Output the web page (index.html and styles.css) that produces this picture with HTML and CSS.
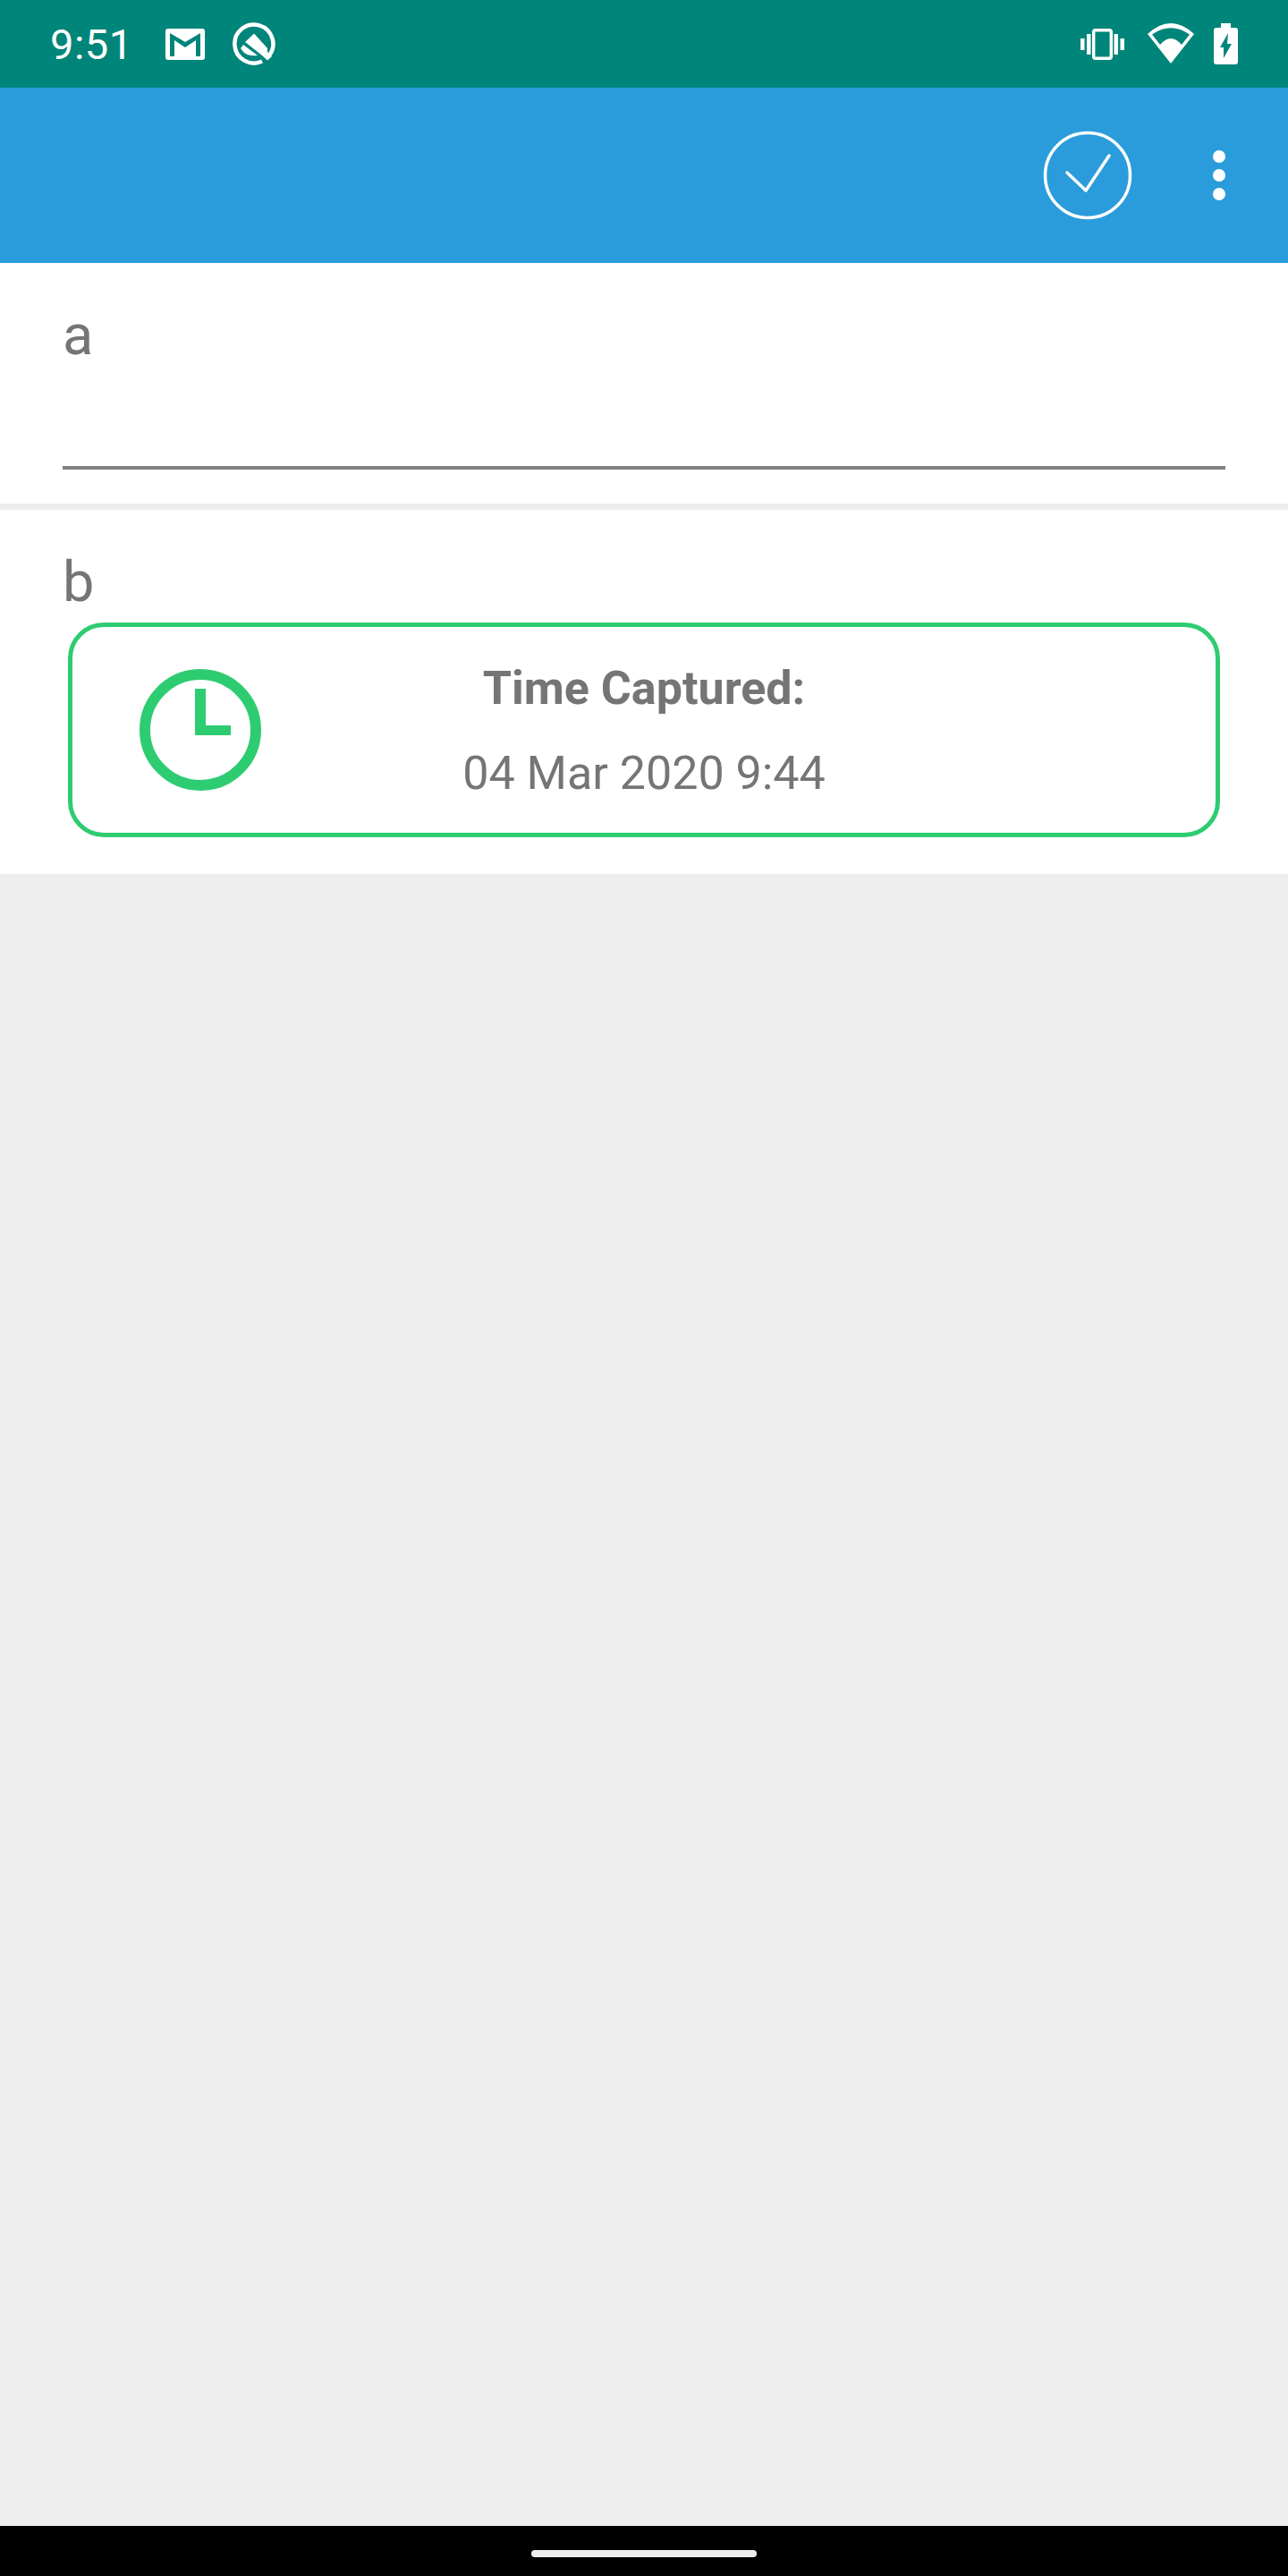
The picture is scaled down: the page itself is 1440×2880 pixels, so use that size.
FILE: index.html
```html
<!DOCTYPE html>
<html lang="en">
<head>
    <meta charset="UTF-8">
    <meta name="viewport" content="width=device-width, initial-scale=1.0">
    <title>Form</title>
    <link rel="stylesheet" href="styles.css">
</head>
<body>
    <div class="screen">
        <div class="status-bar">
            <div class="status-left">
                <span class="clock-text">9:51</span>
                <svg class="icon-gmail" width="44" height="35" viewBox="0 0 44 35">
                    <rect width="44" height="35" rx="3" fill="#fff"/>
                    <path d="M5 5L22 15L39 5V31H34V13L22 21L10 13V31H5Z" fill="#00857a"/>
                </svg>
                <svg class="icon-q" width="48" height="48" viewBox="0 0 48 48">
                    <path d="M33 43.5A21.5 21.5 0 1 1 41 37" fill="none" stroke="#fff" stroke-width="4.5"/>
                    <path d="M24 12.5L39 29V33L44 38L39 42.5L33 37L14 22Z" fill="#fff"/>
                    <path d="M12 25L28 37C22 38 16 37 12 33L9 29Z" fill="#fff"/>
                </svg>
            </div>
            <div class="status-right">
                <svg width="49" height="35" viewBox="0 0 49 35">
                    <rect x="14.7" y="1.7" width="19.6" height="31.6" rx="2" fill="none" stroke="#fff" stroke-width="3.4"/>
                    <rect x="7" y="6" width="4.5" height="23" fill="#fff"/>
                    <rect x="37.5" y="6" width="4.5" height="23" fill="#fff"/>
                    <rect x="0" y="11" width="4.5" height="13" fill="#fff"/>
                    <rect x="44.5" y="11" width="4.5" height="13" fill="#fff"/>
                </svg>
                <svg class="icon-wifi" width="53" height="46" viewBox="0 0 53 46">
                    <path d="M26 45L0 12Q26 -12 52 12Z" fill="#fff"/>
                    <path d="M5 12.5Q26 -2 47 12.5L38 24Q26 10 14 24Z" fill="#00857a"/>
                </svg>
                <svg class="icon-battery" width="27" height="46" viewBox="0 0 27 46">
                    <path d="M8 0H19V5H24Q27 5 27 8V43Q27 46 24 46H3Q0 46 0 43V8Q0 5 3 5H8Z" fill="#fff"/>
                    <path d="M16 11L7 27H11V39L20 23H15Z" fill="#00857a"/>
                </svg>
            </div>
        </div>

        <div class="toolbar">
            <svg class="icon-done" width="100" height="100" viewBox="0 0 100 100">
                <circle cx="50" cy="50" r="47.5" fill="none" stroke="#fff" stroke-width="3.5"/>
                <path d="M27 47L48 67L74 28" fill="none" stroke="#fff" stroke-width="3.5" stroke-linecap="round" stroke-linejoin="round"/>
            </svg>
            <div class="overflow-dots">
                <span class="dot"></span>
                <span class="dot"></span>
                <span class="dot"></span>
            </div>
        </div>

        <div class="content">
            <div class="section section-a">
                <div class="field-label">a</div>
                <div class="field-line"></div>
            </div>
            <div class="section section-b">
                <div class="field-label">b</div>
                <div class="capture-card">
                    <svg class="icon-time" width="136" height="136" viewBox="0 0 136 136">
                        <circle cx="68" cy="68" r="62" fill="none" stroke="#2ecc71" stroke-width="12"/>
                        <path d="M62 22H74V63H102V74H62Z" fill="#2ecc71"/>
                    </svg>
                    <div class="capture-text">
                        <div class="capture-title">Time Captured:</div>
                        <div class="capture-date">04 Mar 2020 9:44</div>
                    </div>
                </div>
            </div>
        </div>

        <div class="nav-bar">
            <div class="nav-pill"></div>
        </div>
    </div>
</body>
</html>
```

FILE: styles.css
```css
* {
    box-sizing: border-box;
}
body {
    margin: 0;
    font-family: Roboto, "Liberation Sans", sans-serif;
    background: #eeeeee;
}
svg {
    display: block;
}
.screen {
    display: flex;
    flex-direction: column;
    height: 2880px;
}
.status-bar {
    height: 98px;
    background: #00857a;
    color: #fff;
    display: flex;
    align-items: center;
    justify-content: space-between;
    padding: 0 56px;
}
.status-left,
.status-right {
    display: flex;
    align-items: center;
}
.clock-text {
    font-size: 47px;
    width: 129px;
    letter-spacing: 0.5px;
}
.icon-q {
    margin-left: 31px;
}
.icon-wifi {
    margin-left: 26px;
}
.icon-battery {
    margin-left: 21px;
}
.toolbar {
    height: 196px;
    background: #2b9cdb;
    display: flex;
    align-items: center;
    padding-right: 70px;
    justify-content: flex-end;
}
.overflow-dots {
    display: flex;
    flex-direction: column;
    gap: 7px;
    margin-left: 90px;
}
.dot {
    width: 14px;
    height: 14px;
    border-radius: 50%;
    background: #fff;
}
.content {
    flex: 1;
    display: flex;
    flex-direction: column;
    gap: 7px;
}
.section {
    background: #fff;
    padding: 0 70px;
}
.section-a {
    height: 269px;
    padding-top: 44px;
}
.section-b {
    height: 407px;
    padding-top: 44px;
}
.field-label {
    font-size: 63px;
    line-height: 74px;
    color: #757575;
}
.field-line {
    height: 4px;
    background: #808080;
    margin-top: 109px;
}
.capture-card {
    width: 1288px;
    height: 240px;
    margin: 8px 0 0 6px;
    border: 5px solid #2ecc71;
    border-radius: 40px;
    display: grid;
    grid-template-columns: 1fr auto 1fr;
    align-items: center;
}
.icon-time {
    margin-left: 75px;
}
.capture-text {
    padding-top: 3px;
    text-align: center;
    color: #757575;
    font-size: 52px;
    line-height: 60px;
}
.capture-title {
    font-weight: 700;
}
.capture-date {
    margin-top: 35px;
}
.nav-bar {
    height: 56px;
    background: #000;
    display: flex;
    justify-content: center;
    padding-top: 27px;
}
.nav-pill {
    width: 252px;
    height: 8px;
    border-radius: 4px;
    background: #eeeeee;
}
```
